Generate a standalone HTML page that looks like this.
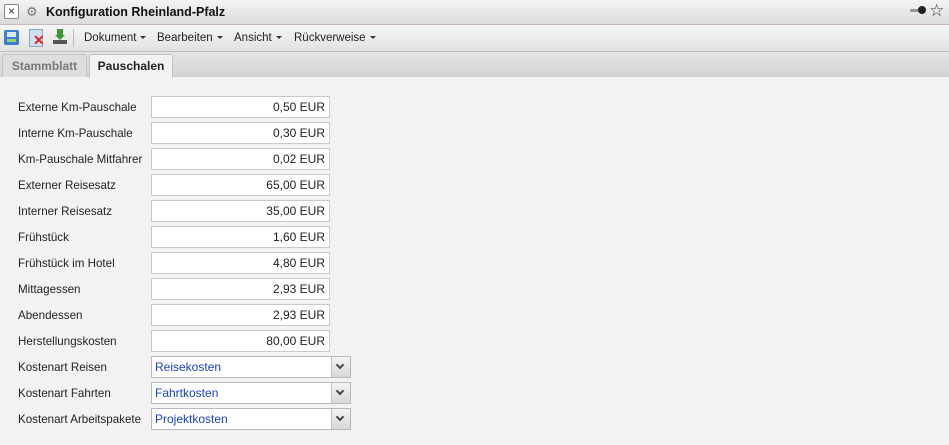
<!DOCTYPE html>
<html><head><style>
body{margin:0;width:949px;height:445px;background:#f2f2f2;font-family:"Liberation Sans",sans-serif;font-size:12px;color:#222;position:relative;overflow:hidden}
.title{position:absolute;left:0;top:0;width:949px;height:24px;background:linear-gradient(#f4f4f4,#dcdcdc);border-bottom:1px solid #c9b8b8}
.title b{position:absolute;left:46px;top:5px;font-size:12.5px;color:#111}
.tb{position:absolute;left:0;top:25px;width:949px;height:26px;background:linear-gradient(#f6f6f6,#e2e2e2);border-bottom:1px solid #c9b8b8}
.m{position:absolute;top:7px;font-size:11.5px;color:#222}
.m:after{content:"";display:inline-block;margin-left:4px;border:3px solid transparent;border-top:3px solid #333;vertical-align:-1px}
.tabs{position:absolute;left:0;top:52px;width:949px;height:24px;background:linear-gradient(#e4e4e4,#d4d4d4);border-bottom:1px solid #ccc}
.tab{position:absolute;top:2px;height:22px;border:1px solid #c4c4c4;border-bottom:none;border-radius:3px 3px 0 0;font-weight:bold;font-size:12px;line-height:22px;text-align:center}
.l{position:absolute;left:18px;font-size:11.6px;color:#222}
.i{position:absolute;left:151px;width:177px;height:20px;border:1px solid #c8c8d0;background:#fff;text-align:right;line-height:21px;font-size:12px;box-sizing:content-box;padding-right:0}
.i span{margin-right:4px}
.s{position:absolute;left:151px;width:198px;height:20px;border:1px solid #b8b8c0;background:#fff;line-height:21px;color:#1a3fc8;font-size:12px}
.s span{margin-left:3px}
.s i{position:absolute;right:0;top:0;width:18px;height:20px;border-left:1px solid #c0c0c0;background:linear-gradient(#f4f4f4,#d8d8d8)}
.s i:after{content:"";position:absolute;left:5px;width:4px;height:4px;border-right:2px solid #444;border-bottom:2px solid #444;transform:rotate(45deg);top:5px}
</style></head><body>
<div class="title">
<div style="position:absolute;left:4px;top:4px;width:13px;height:13px;border:1px solid #888;border-radius:2px;background:#fafafa;font-size:12px;line-height:12px;text-align:center;color:#333">×</div>
<div style="position:absolute;left:26px;top:6px;width:14px;height:11px;color:#777;font-size:13px;line-height:11px">⚙</div>
<b>Konfiguration Rheinland-Pfalz</b>
<div style="position:absolute;left:910px;top:9px;width:10px;height:3px;background:#999"></div>
<div style="position:absolute;left:918px;top:6px;width:8px;height:8px;border-radius:50%;background:#222"></div>
<div style="position:absolute;left:929px;top:1px;font-size:17px;color:#333">☆</div>
</div>
<div class="tb">
<div style="position:absolute;left:4px;top:5px;width:15px;height:15px;background:#3a7ed8;border-radius:2px"><div style="margin:2px 3px;height:5px;background:#dfe9f5"></div><div style="margin:2px 3px;height:3px;background:#9ccf6c"></div></div>
<div style="position:absolute;left:29px;top:4px;width:12px;height:16px;background:#cfe0f5;border:1px solid #8aa"></div>
<div style="position:absolute;left:33px;top:9px;color:#e02020;font-weight:bold;font-size:14px;line-height:12px">✕</div>
<div style="position:absolute;left:53px;top:4px;width:14px;height:15px"><div style="margin-left:4px;width:6px;height:6px;background:#3a9a30"></div><div style="width:0;margin-left:2px;border:5px solid transparent;border-top:5px solid #3a9a30;border-bottom:none"></div><div style="height:4px;background:#555"></div></div>
<div style="position:absolute;left:73px;top:4px;width:1px;height:18px;background:#bbb"></div>
<span class="m" style="left:84px">Dokument</span>
<span class="m" style="left:157px">Bearbeiten</span>
<span class="m" style="left:234px">Ansicht</span>
<span class="m" style="left:294px">Rückverweise</span>
</div>
<div class="tabs">
<div class="tab" style="left:2px;width:83px;background:#dedede;color:#777">Stammblatt</div>
<div class="tab" style="left:89px;width:82px;background:#f2f2f2;color:#222;height:23px">Pauschalen</div>
</div>
<div class="l" style="top:101px">Externe Km-Pauschale</div><div class="i" style="top:96px"><span>0,50 EUR</span></div>
<div class="l" style="top:127px">Interne Km-Pauschale</div><div class="i" style="top:122px"><span>0,30 EUR</span></div>
<div class="l" style="top:153px">Km-Pauschale Mitfahrer</div><div class="i" style="top:148px"><span>0,02 EUR</span></div>
<div class="l" style="top:179px">Externer Reisesatz</div><div class="i" style="top:174px"><span>65,00 EUR</span></div>
<div class="l" style="top:205px">Interner Reisesatz</div><div class="i" style="top:200px"><span>35,00 EUR</span></div>
<div class="l" style="top:231px">Frühstück</div><div class="i" style="top:226px"><span>1,60 EUR</span></div>
<div class="l" style="top:257px">Frühstück im Hotel</div><div class="i" style="top:252px"><span>4,80 EUR</span></div>
<div class="l" style="top:283px">Mittagessen</div><div class="i" style="top:278px"><span>2,93 EUR</span></div>
<div class="l" style="top:309px">Abendessen</div><div class="i" style="top:304px"><span>2,93 EUR</span></div>
<div class="l" style="top:335px">Herstellungskosten</div><div class="i" style="top:330px"><span>80,00 EUR</span></div>
<div class="l" style="top:361px">Kostenart Reisen</div><div class="s" style="top:356px"><span>Reisekosten</span><i></i></div>
<div class="l" style="top:387px">Kostenart Fahrten</div><div class="s" style="top:382px"><span>Fahrtkosten</span><i></i></div>
<div class="l" style="top:413px">Kostenart Arbeitspakete</div><div class="s" style="top:408px"><span>Projektkosten</span><i></i></div>
</body></html>
